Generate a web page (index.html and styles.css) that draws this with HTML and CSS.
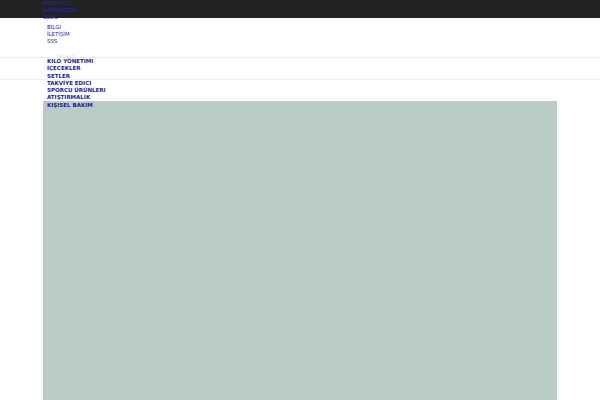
FILE: index.html
```html
<!DOCTYPE html>
<html lang="tr">
<head>
<meta charset="utf-8">
<title>Mağaza</title>
<link rel="stylesheet" href="styles.css">
</head>
<body>
<div class="topbar">
  <div class="wrap">
    <ul class="menu">
      <li class="dim">PRODUCTS</li>
      <li class="bright">HAKKIMIZDA</li>
      <li>BLOG</li>
    </ul>
    <ul class="submenu">
      <li>BILGI</li>
      <li>İLETİŞİM</li>
      <li>SSS</li>
    </ul>
  </div>
</div>
<div class="header">
  <div class="wrap"><span class="faint">İletişim</span></div>
</div>
<div class="navbar">
  <div class="wrap">
    <ul class="cats">
      <li>KILO YÖNETIMI</li>
      <li>İÇECEKLER</li>
      <li>SETLER</li>
      <li>TAKVİYE EDICI</li>
      <li>SPORCU ÜRÜNLERI</li>
      <li>ATIŞTIRMALIK</li>
      <li>KIŞISEL BAKIM</li>
    </ul>
  </div>
</div>
<div class="main">
  <div class="hero"></div>
</div>
</body>
</html>
```
FILE: styles.css
```css
html, body {
  margin: 0;
  padding: 0;
  background: #ffffff;
  font-family: "DejaVu Sans", sans-serif;
}
ul {
  list-style: none;
  margin: 0;
  padding: 0;
}
.wrap {
  padding-left: 43px;
}
.topbar {
  height: 18px;
  background: #222222;
}
.menu {
  font-size: 5.4px;
  line-height: 7px;
  color: #2222a8;
}
.menu .dim {
  color: #3a2a80;
}
.menu .bright {
  color: #2424c8;
}
.submenu {
  margin-top: 2.5px;
  padding-left: 4px;
  font-size: 5.4px;
  line-height: 7px;
  color: #2222a8;
}
.header {
  height: 39px;
  border-bottom: 1px solid #ececec;
}
.faint {
  display: block;
  height: 39px;
  padding-left: 14px;
  font-size: 5px;
  line-height: 76px;
  color: #e2e2e2;
}
.navbar {
  height: 21px;
  border-bottom: 1px solid #f0f0f0;
}
.cats {
  padding-left: 4px;
  padding-top: 0;
  font-size: 5.5px;
  font-weight: bold;
  line-height: 7.3px;
  color: #1c1ca0;
}
.main {
  padding: 21px 43px 0 43px;
}
.hero {
  height: 300px;
  background: #b9cdc6;
}
```
